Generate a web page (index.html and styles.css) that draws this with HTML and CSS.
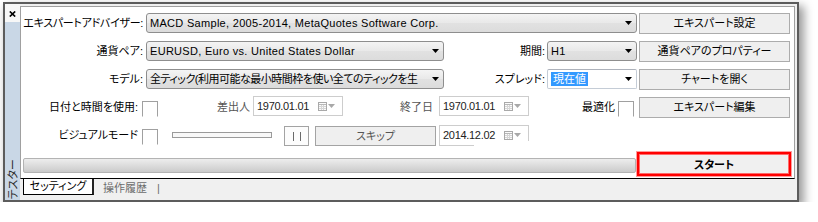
FILE: index.html
```html
<!DOCTYPE html>
<html lang="ja">
<head>
<meta charset="utf-8">
<title>テスター</title>
<link rel="stylesheet" href="styles.css">
</head>
<body>
<div class="window">
  <div class="side">
    <div class="side-top">
      <svg class="close" width="7" height="6" viewBox="0 0 7 6"><path d="M0.8 0.5 L6.2 5.5 M6.2 0.5 L0.8 5.5" stroke="#000" stroke-width="1.7" fill="none"/></svg>
    </div>
    <div class="side-bar"><span class="side-title">テスター</span></div>
  </div>
  <div class="main">
    <div class="panel">
      <div class="row">
        <span class="lbl tight">エキスパートアドバイザー:</span>
        <div class="combo c-wide"><span class="combo-text latin">MACD Sample, 2005-2014, MetaQuotes Software Corp.</span><svg class="arrow" width="7" height="4" viewBox="0 0 7 4"><polygon points="0,0 7,0 3.5,4" fill="#000"/></svg></div>
        <button class="btn">エキスパート設定</button>
      </div>
      <div class="row">
        <span class="lbl">通貨ペア:</span>
        <div class="combo c-mid"><span class="combo-text latin">EURUSD, Euro vs. United States Dollar</span><svg class="arrow" width="7" height="4" viewBox="0 0 7 4"><polygon points="0,0 7,0 3.5,4" fill="#000"/></svg></div>
        <span class="lbl lbl-mid">期間:</span>
        <div class="combo c-small"><span class="combo-text latin">H1</span><svg class="arrow" width="7" height="4" viewBox="0 0 7 4"><polygon points="0,0 7,0 3.5,4" fill="#000"/></svg></div>
        <button class="btn">通貨ペアのプロパティー</button>
      </div>
      <div class="row">
        <span class="lbl">モデル:</span>
        <div class="combo c-mid"><span class="combo-text fit">全ティック(利用可能な最小時間枠を使い全てのティックを生</span><svg class="arrow" width="7" height="4" viewBox="0 0 7 4"><polygon points="0,0 7,0 3.5,4" fill="#000"/></svg></div>
        <span class="lbl lbl-mid">スプレッド:</span>
        <div class="combo c-small edit"><span class="combo-text"><span class="sel">現在値</span></span><svg class="arrow" width="7" height="4" viewBox="0 0 7 4"><polygon points="0,0 7,0 3.5,4" fill="#000"/></svg></div>
        <button class="btn">チャートを開く</button>
      </div>
      <div class="row">
        <span class="lbl lbl-chk">日付と時間を使用:</span>
        <span class="chk"></span>
        <span class="lbl lbl-from dim">差出人</span>
        <div class="date date-up"><span class="date-text">1970.01.01</span><svg class="cal" width="9" height="9" viewBox="0 0 9 9"><rect x="0.5" y="0.5" width="8" height="8" fill="#fbfbfb" stroke="#a9a9a9"/><path d="M1 2.5 H8" stroke="#b8b8b8"/><path d="M3.5 3 V8 M5.5 3 V8 M1 4.5 H8 M1 6.5 H8" stroke="#d6d6d6"/></svg><svg class="darrow" width="7" height="4" viewBox="0 0 7 4"><polygon points="0,0 7,0 3.5,4" fill="#a8a8a8"/></svg></div>
        <span class="lbl lbl-to dim">終了日</span>
        <div class="date date-up"><span class="date-text">1970.01.01</span><svg class="cal" width="9" height="9" viewBox="0 0 9 9"><rect x="0.5" y="0.5" width="8" height="8" fill="#fbfbfb" stroke="#a9a9a9"/><path d="M1 2.5 H8" stroke="#b8b8b8"/><path d="M3.5 3 V8 M5.5 3 V8 M1 4.5 H8 M1 6.5 H8" stroke="#d6d6d6"/></svg><svg class="darrow" width="7" height="4" viewBox="0 0 7 4"><polygon points="0,0 7,0 3.5,4" fill="#a8a8a8"/></svg></div>
        <span class="lbl lbl-opt">最適化</span>
        <span class="chk"></span>
        <button class="btn btn-edit">エキスパート編集</button>
      </div>
      <div class="row">
        <span class="lbl lbl-chk">ビジュアルモード</span>
        <span class="chk"></span>
        <span class="track"></span>
        <button class="pause"><span class="bars"></span></button>
        <button class="skip">スキップ</button>
        <div class="date date-cut"><span class="date-text">2014.12.02</span><svg class="cal" width="9" height="9" viewBox="0 0 9 9"><rect x="0.5" y="0.5" width="8" height="8" fill="#fbfbfb" stroke="#a9a9a9"/><path d="M1 2.5 H8" stroke="#b8b8b8"/><path d="M3.5 3 V8 M5.5 3 V8 M1 4.5 H8 M1 6.5 H8" stroke="#d6d6d6"/></svg><svg class="darrow" width="7" height="4" viewBox="0 0 7 4"><polygon points="0,0 7,0 3.5,4" fill="#a8a8a8"/></svg></div>
      </div>
      <div class="row row-run">
        <div class="progress"></div>
        <button class="start">スタート</button>
      </div>
    </div>
    <div class="tabs">
      <span class="tab active">セッティング</span>
      <span class="tab">操作履歴</span>
      <span class="tab sep">|</span>
    </div>
  </div>
</div>
</body>
</html>
```

FILE: styles.css
```css
* { box-sizing: border-box; }
html, body { margin: 0; padding: 0; background: #fff; }
body {
  font-family: "Liberation Sans", "Noto Sans CJK JP", sans-serif;
  font-size: 11px;
  color: #000;
  font-feature-settings: "palt";
}

.window {
  margin: 2px 0 0 3px;
  width: 796px;
  height: 200px;
  border: 2px solid #5c5c5c;
  background: #f0f0f0;
  display: flex;
  box-shadow: 4px 5px 9px 1px rgba(0, 0, 0, 0.4);
}

/* left strip */
.side { width: 15px; display: flex; flex-direction: column; flex: none; }
.side-top {
  height: 18px;
  background: #f7f7f7;
  display: flex;
  justify-content: center;
  padding-top: 7px;
}
.close { display: block; }
.side-bar {
  flex: 1;
  background: #c9d7e6;
  display: flex;
  align-items: flex-end;
  justify-content: center;
  padding-bottom: 1px;
}
.side-title {
  writing-mode: vertical-rl;
  text-orientation: sideways;
  transform: rotate(180deg);
  font-size: 11px;
  line-height: 12px;
  color: #2b2b2b;
}

/* main area */
.main {
  flex: 1;
  display: flex;
  flex-direction: column;
  padding: 2px 2px 0 0;
}
.panel {
  height: 173px;
  flex: none;
  background: #fff;
  border: 1px solid #a0a0a0;
  border-bottom-color: #000;
  padding-top: 6px;
  display: flex;
  flex-direction: column;
  gap: 7px;
}
.row { display: flex; align-items: flex-start; height: 21px; flex: none; }

.lbl {
  width: 122px;
  flex: none;
  text-align: right;
  line-height: 21px;
  white-space: nowrap;
}
.tight { letter-spacing: -0.3px; }
.lbl-mid { width: 103px; padding-right: 2px; }
.lbl-chk { width: 121px; padding-right: 4px; }
.lbl-from { width: 95px; padding-right: 3px; }
.lbl-to { width: 96px; padding-right: 6px; }
.lbl-opt { width: 89px; padding-right: 3px; }
.dim { color: #555; }

/* combo boxes */
.combo {
  flex: none;
  height: 20px;
  border: 1px solid #8e8e8e;
  border-radius: 3px;
  background: linear-gradient(#f4f4f4, #e9e9e9 48%, #e1e1e1 52%, #dcdcdc);
  display: flex;
  align-items: center;
  padding: 0 4px 0 3px;
}
.c-wide { width: 491px; margin-left: 3px; }
.c-mid { width: 298px; margin-left: 3px; }
.c-small { width: 90px; }
.combo-text {
  flex: 1;
  overflow: hidden;
  white-space: nowrap;
  line-height: 18px;
}
.latin { letter-spacing: 0.3px; }
.fit { letter-spacing: -0.5px; }
.arrow { flex: none; margin-left: 6px; display: block; }
.edit {
  background: #fff;
  border-color: #c4ccd6;
  border-top-color: #adb2bb;
  border-radius: 2px;
}
.sel {
  background: #3399ff;
  color: #fff;
  padding: 1px 2px;
  line-height: 13px;
}

/* buttons */
.btn {
  flex: none;
  width: 151px;
  height: 21px;
  margin: 0 0 0 2px;
  padding: 0;
  border: 1px solid #acacac;
  background: #efefef;
  font: inherit;
  color: #000;
  line-height: 19px;
  text-align: center;
}
.btn-edit { margin-left: 5px; }

/* checkboxes */
.chk {
  flex: none;
  width: 16px;
  height: 16px;
  margin-top: 4px;
  border: 1px solid #a0a0a0;
  border-bottom-color: transparent;
  background: #fff;
}

/* date pickers */
.date {
  flex: none;
  width: 90px;
  height: 20px;
  border: 1px solid #cdcdcd;
  background: #fff;
  display: flex;
  align-items: center;
  padding-left: 3px;
}
.date-up { margin-top: -1px; }
.date-text {
  width: 61px;
  flex: none;
  letter-spacing: -0.3px;
  color: #222;
  white-space: nowrap;
}
.cal { display: block; flex: none; }
.darrow { display: block; flex: none; margin-left: 1px; }
.date-cut {
  margin-left: 3px;
  margin-top: 0;
  height: 21px;
  border-right: none;
  border-bottom: none;
  background:
    linear-gradient(#cdcdcd, #cdcdcd) right top / 1px 15px no-repeat,
    linear-gradient(#cdcdcd, #cdcdcd) left bottom / 34px 1px no-repeat,
    #fff;
  align-items: flex-start;
  padding-top: 3px;
}
.date-cut .cal { margin-top: 2px; }
.date-cut .darrow { margin-top: 4px; }

/* visual mode controls */
.track {
  flex: none;
  width: 100px;
  height: 6px;
  margin: 7px 0 0 14px;
  border: 1px solid #9a9a9a;
  background: #f8f8f8;
}
.pause {
  flex: none;
  width: 25px;
  height: 20px;
  margin: 1px 0 0 12px;
  padding: 0;
  border: 1px solid #a3a3a3;
  background: #fcfcfc;
  display: flex;
  align-items: center;
  justify-content: center;
}
.bars {
  display: block;
  width: 8px;
  height: 9px;
  border-left: 1px solid #6a6a6a;
  border-right: 1px solid #6a6a6a;
}
.skip {
  flex: none;
  width: 121px;
  height: 20px;
  margin: 1px 0 0 6px;
  padding: 0;
  border: 1px solid #a3a3a3;
  background: #efefef;
  font: inherit;
  color: #555;
  line-height: 18px;
  text-align: center;
}

/* run row */
.row-run { height: 24px; margin-top: -1px; align-items: center; }
.progress {
  flex: none;
  width: 613px;
  height: 15px;
  margin: 2px 0 0 2px;
  border: 1px solid #b3b3b3;
  border-radius: 2px;
  background: linear-gradient(#ededed, #dedede 45%, #d2d2d2 80%, #cacaca);
}
.start {
  flex: none;
  width: 154px;
  height: 24px;
  margin: 0 0 0 1px;
  padding: 0;
  border: 2px solid #ff0000;
  box-shadow: 0 0 0 1px #ff9c9c, inset 0 0 0 1px #ff6a6a;
  background: #f0f0f0;
  font: inherit;
  font-weight: bold;
  color: #000;
  text-align: center;
}

/* bottom tabs */
.tabs {
  height: 21px;
  flex: none;
  display: flex;
  align-items: flex-start;
  padding-left: 3px;
}
.tab {
  line-height: 15px;
  color: #6d6d6d;
  margin-left: 9px;
  padding-top: 2px;
  white-space: nowrap;
}
.tab.active {
  width: 71px;
  height: 16px;
  margin-left: 0;
  padding-top: 0;
  background: #fff;
  color: #000;
  text-align: center;
  border-left: 1px solid #000;
  border-bottom: 1px solid #000;
  border-right: 2px solid #222;
}
.tab.sep { margin-left: 10px; }
```
